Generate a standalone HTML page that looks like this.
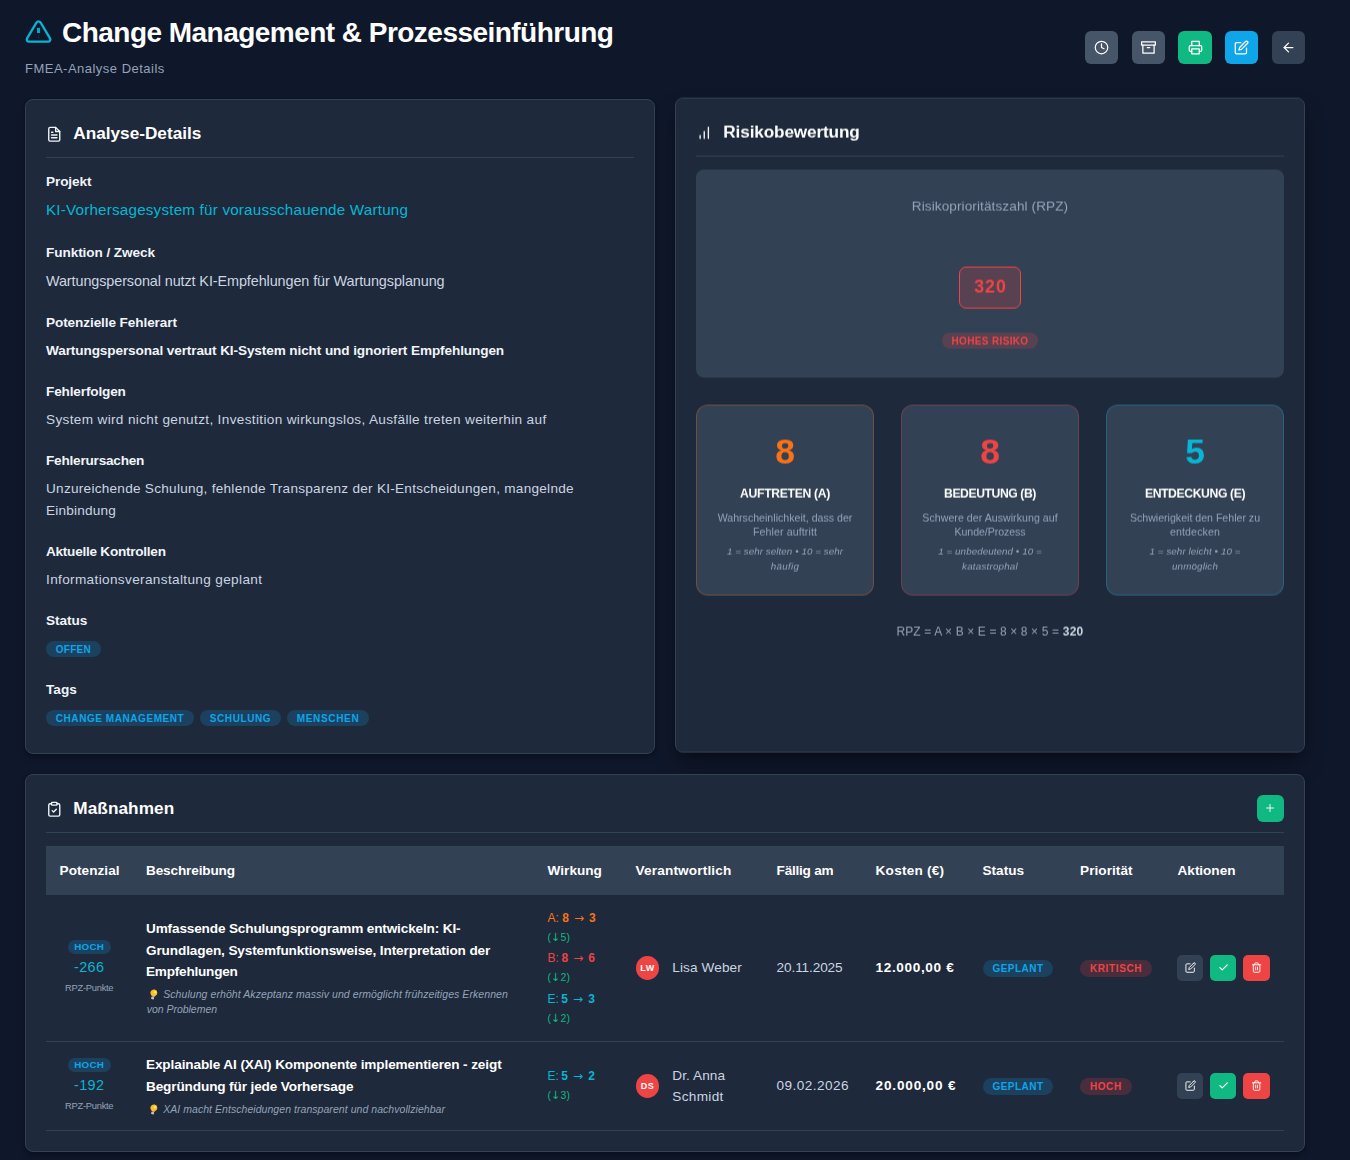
<!DOCTYPE html>
<html lang="de">
<head>
<meta charset="utf-8">
<title>FMEA-Analyse Details – Change Management &amp; Prozesseinführung</title>
<style>
*{box-sizing:border-box;margin:0;padding:0}
html,body{width:1350px;height:1160px;overflow:hidden}
body{background:#0f172a;color:#f1f5f9;font-family:"Liberation Sans","DejaVu Sans",sans-serif;font-size:14px;line-height:22px;position:relative}
svg{display:block}
.ic{fill:none;stroke:currentColor;stroke-width:2;stroke-linecap:round;stroke-linejoin:round}

/* ---------- page header ---------- */
.page-header{position:absolute;left:25px;top:0;width:1280px;height:99px}
.page-title{position:absolute;left:0;top:13px;height:40px;display:flex;align-items:center;white-space:nowrap;
  font-size:28px;line-height:40px;font-weight:700;color:#fff;letter-spacing:-.54px}
.page-title svg{position:absolute;left:-.2px;top:4.85px;width:27.1px;height:27.1px;color:#06b6d4}
.page-title span{margin-left:37px}
.page-sub{position:absolute;left:0;top:59px;font-size:13px;line-height:20px;color:#94a3b8;letter-spacing:.45px;white-space:nowrap}
.actions{position:absolute;right:0;top:31px;display:flex;gap:14px}
.btn{width:33px;height:33px;border-radius:6px;display:flex;align-items:center;justify-content:center;color:#fff;background:#475569}
.btn svg{width:15px;height:15px;margin-top:-.5px}
.btn.green{background:#10b981;width:34px;margin:0 -1px}
.btn.blue{background:#0ea5e9}
.btn.dark{background:#334155}

/* ---------- cards ---------- */
.card{position:absolute;background:#1e293b;border:1px solid #334155;border-radius:8px;padding:20px;
  box-shadow:0 4px 6px -1px rgba(0,0,0,.26),0 2px 4px -1px rgba(0,0,0,.18)}
.card-head{display:flex;align-items:flex-start;height:38px;border-bottom:1px solid #334155;margin-bottom:13px;position:relative}
.card-head svg{width:16.5px;height:16.5px;margin:6px 12px 0 0;color:#f1f5f9;flex:none}
.card-head h2{font-size:17.2px;line-height:22px;margin:2px 0 0 -1.2px;font-weight:700;color:#fff;white-space:nowrap}

#details{left:25px;top:99px;width:630px;height:655px}
#risk{left:675px;top:98px;width:630px;height:655px;filter:url(#subpx);
  box-shadow:0 12px 24px -4px rgba(0,0,0,.4),0 4px 8px -2px rgba(0,0,0,.26)}
#measures{left:25px;top:774px;width:1280px;height:378px}

/* ---------- detail fields ---------- */
.field{height:69px}
.field.f1{height:71px}
.field.f2{height:70px}
.field.f5{height:91px}
.field .lbl{font-size:13.6px;line-height:22px;font-weight:700;color:#f1f5f9;letter-spacing:-.3px;white-space:nowrap}
.field .val{font-size:13.6px;line-height:22px;color:#cbd5e1;margin-top:6px;letter-spacing:.1px;white-space:nowrap}
.field .val.link{font-size:15.2px;line-height:24px;margin-top:5px;color:#06b6d4;letter-spacing:.29px}
.field .val.mid{font-size:14.4px}
.field .val.strong{font-weight:700;color:#f1f5f9;letter-spacing:-.32px}
.badge{display:inline-block;vertical-align:top;border-radius:999px;font-weight:700;text-transform:uppercase;white-space:nowrap}
.badge.blue{background:rgba(14,165,233,.2);color:#0ea5e9}
.badge.red{background:rgba(239,68,68,.2);color:#ef4444}
.tags{display:flex;gap:6px;margin-top:9px}
.tags .badge{height:16.3px;line-height:17.2px}
.badge{font-size:10px;line-height:17.6px;height:17px;padding:0 9.8px;letter-spacing:.3px}
td>.badge{position:relative;top:3px}

/* ---------- risk card ---------- */
.rpz-panel{height:208px;background:#334155;border-radius:8px;text-align:center;position:relative}
.rpz-panel .cap{position:absolute;left:0;right:0;top:26px;font-size:13.6px;line-height:22px;color:#94a3b8;letter-spacing:.3px}
.rpz-val{position:absolute;left:263px;top:97px;width:62px;height:42px;border:1px solid #ef4444;border-radius:7px;background:rgba(239,68,68,.2);
  color:#ef4444;font-size:17.8px;font-weight:700;line-height:38.4px;letter-spacing:1px;text-indent:1px}
.rpz-panel .badge{position:absolute;left:246px;top:162.7px;width:96px;height:16.4px;line-height:17px;padding:0}
.factors{display:flex;gap:27px;margin-top:27px}
.factor{width:178px;height:191px;background:#334155;border:1px solid #334155;border-radius:12px;text-align:center;position:relative}
.factor.a{border-color:rgba(249,115,22,.3)}
.factor.b{border-color:rgba(239,68,68,.3)}
.factor.e{border-color:rgba(6,182,212,.3)}
.factor .num{position:absolute;left:0;right:0;top:24.4px;font-size:35.5px;line-height:44px;font-weight:700}
.factor.a .num{color:#f97316}
.factor.b .num{color:#ef4444}
.factor.e .num{color:#06b6d4}
.factor .name{position:absolute;left:0;right:0;top:78.2px;font-size:12.2px;line-height:20px;font-weight:700;color:#fff;letter-spacing:-.2px}
.factor .desc{position:absolute;left:0;right:0;top:105px;font-size:10.6px;line-height:14px;color:#94a3b8;letter-spacing:.3px}
.factor .scale{position:absolute;left:0;right:0;top:137.7px;font-size:9.8px;line-height:15px;color:#94a3b8;font-style:italic;letter-spacing:.3px}
.formula{margin-top:26px;text-align:center;font-size:12px;line-height:20px;color:#94a3b8;letter-spacing:.3px}
.formula b{color:#cbd5e1}

/* ---------- measures ---------- */
.add{position:absolute;right:0;top:0;width:27px;height:27px;border-radius:6px;background:#10b981;color:#fff;display:flex;align-items:center;justify-content:center}
.card-head .add svg{width:12px;height:12px;margin:-.5px 0 0 -.5px}
table{border-collapse:collapse;table-layout:fixed;width:1238px;font-size:13.6px;line-height:21.76px}
th{background:#334155;height:49px;padding:0 13.6px;text-align:left;font-weight:700;color:#fff;letter-spacing:-.3px;white-space:nowrap;vertical-align:middle}
td{padding:0 13.6px;vertical-align:middle;border-bottom:1px solid #334155;color:#cbd5e1;white-space:nowrap}
tr.r1 td{height:146px}
tr.r2 td{height:89px}
.pot{text-align:center;padding-bottom:2px}
.pot .badge{font-size:9.8px;line-height:14.4px;height:14px;padding:0;letter-spacing:.5px;display:block;width:43.4px;margin:-1px auto 0}
.pot .delta{display:block;font-size:14.4px;line-height:22px;color:#06b6d4;margin-top:5px;letter-spacing:.4px}
.pot .unit{display:block;font-size:9.4px;line-height:16px;color:#94a3b8;margin-top:2px}
.desc-main{font-weight:700;color:#fff;letter-spacing:-.3px;padding-top:.6px;line-height:21.5px}
.desc-note{font-size:10.5px;line-height:15.6px;color:#94a3b8;font-style:italic;margin-top:4.4px;letter-spacing:.2px;padding-left:.8px}
.eff{font-size:12px;line-height:19px;height:40.5px}
.eff:last-child{height:37.4px}
.arr{font-family:"DejaVu Sans",sans-serif;font-weight:400;font-size:1em;line-height:1;margin:0 1.7px}
small .arr{font-size:1.08em;margin:0 -.3px}
.eff b{font-weight:700}
.eff.e b{margin-left:-.9px}
.eff.b b{margin-left:-.7px}
.eff small{display:block;font-size:10.4px;line-height:19.8px;color:#10b981;letter-spacing:.3px}
.eff.a{color:#f97316}.eff.b{color:#ef4444}.eff.e{color:#06b6d4}
.who{display:flex;align-items:center}
.r2 .who>span:last-child{line-height:21px;padding-top:1.8px}
.r2 .avatar{margin-top:2px}
.avatar{width:23.4px;height:24px;border-radius:50%;background:#ef4444;color:#fff;font-size:9px;font-weight:700;line-height:24px;text-align:center;flex:none;margin-right:13.3px;letter-spacing:.3px;text-indent:.3px}
.cost{font-weight:700;color:#fff}
.acts{display:flex;gap:7px;margin-left:-.4px}
.abtn{width:26.7px;height:26px;border-radius:5px;display:flex;align-items:center;justify-content:center;color:#fff;background:#334155}
.abtn svg{width:11.2px;height:11.2px}
.abtn.green{background:#10b981}
.abtn.red{background:#ef4444;width:27.6px}
.abtn.green svg{stroke-width:2.5}
.bulb{display:inline-block;vertical-align:-2.2px;width:11px;height:11px;margin:0 3.8px 0 1.6px}
</style>
</head>
<body>
<svg width="0" height="0" style="position:absolute" aria-hidden="true"><filter id="subpx" x="-8%" y="-8%" width="116%" height="116%" color-interpolation-filters="sRGB"><feOffset dy="-1" result="up"/><feComposite in="up" in2="SourceGraphic" operator="arithmetic" k2=".4" k3=".6"/></filter></svg>

<header class="page-header">
  <h1 class="page-title">
    <svg viewBox="0 0 24 24" class="ic"><path d="M10.29 3.86 1.82 18a2 2 0 0 0 1.71 3h16.94a2 2 0 0 0 1.71-3L13.71 3.86a2 2 0 0 0-3.42 0z"/><path d="M12 8.7v4.6" stroke-linecap="butt" stroke-width="2.7" opacity=".9"/><path d="M12 17h.01" opacity=".12"/></svg>
    <span style="letter-spacing:-.53px">Change Management &amp; Prozesseinführung</span>
  </h1>
  <p class="page-sub" style="letter-spacing:.49px">FMEA-Analyse Details</p>
  <nav class="actions">
    <a class="btn"><svg viewBox="0 0 24 24" class="ic"><circle cx="12" cy="12" r="10"/><path d="M12 6v6l4 2"/></svg></a>
    <a class="btn"><svg viewBox="0 0 24 24" class="ic"><path d="M21 8v13H3V8"/><rect x="1" y="3" width="22" height="5"/><path d="M10 12h4"/></svg></a>
    <a class="btn green"><svg viewBox="0 0 24 24" class="ic"><path d="M6 9V2h12v7"/><path d="M6 18H4a2 2 0 0 1-2-2v-5a2 2 0 0 1 2-2h16a2 2 0 0 1 2 2v5a2 2 0 0 1-2 2h-2"/><rect x="6" y="14" width="12" height="8"/></svg></a>
    <a class="btn blue"><svg viewBox="0 0 24 24" class="ic"><path d="M11 4H4a2 2 0 0 0-2 2v14a2 2 0 0 0 2 2h14a2 2 0 0 0 2-2v-7"/><path d="M18.5 2.5a2.121 2.121 0 0 1 3 3L12 15l-4 1 1-4 9.5-9.5z"/></svg></a>
    <a class="btn dark"><svg viewBox="0 0 24 24" class="ic"><path d="m12 19-7-7 7-7"/><path d="M19 12H5"/></svg></a>
  </nav>
</header>

<section class="card" id="details">
  <div class="card-head">
    <svg viewBox="0 0 24 24" class="ic"><path d="M14 2H6a2 2 0 0 0-2 2v16a2 2 0 0 0 2 2h12a2 2 0 0 0 2-2V8z"/><path d="M14 2v6h6"/><path d="M16 13H8"/><path d="M16 17H8"/><path d="M10 9H8"/></svg>
    <h2 style="letter-spacing:0">Analyse-Details</h2>
  </div>
  <div class="field f1"><div class="lbl" style="letter-spacing:-.11px">Projekt</div><div class="val link" style="letter-spacing:.21px">KI-Vorhersagesystem für vorausschauende Wartung</div></div>
  <div class="field f2"><div class="lbl" style="letter-spacing:-.08px">Funktion / Zweck</div><div class="val mid" style="letter-spacing:-.09px">Wartungspersonal nutzt KI-Empfehlungen für Wartungsplanung</div></div>
  <div class="field"><div class="lbl" style="letter-spacing:-.1px">Potenzielle Fehlerart</div><div class="val strong" style="letter-spacing:-.11px">Wartungspersonal vertraut KI-System nicht und ignoriert Empfehlungen</div></div>
  <div class="field"><div class="lbl" style="letter-spacing:-.15px">Fehlerfolgen</div><div class="val" style="letter-spacing:.34px">System wird nicht genutzt, Investition wirkungslos, Ausfälle treten weiterhin auf</div></div>
  <div class="field f5"><div class="lbl" style="letter-spacing:-.22px">Fehlerursachen</div><div class="val"><span style="letter-spacing:.26px">Unzureichende Schulung, fehlende Transparenz der KI-Entscheidungen, mangelnde</span><br><span style="letter-spacing:.21px">Einbindung</span></div></div>
  <div class="field"><div class="lbl" style="letter-spacing:-.26px">Aktuelle Kontrollen</div><div class="val" style="letter-spacing:.35px">Informationsveranstaltung geplant</div></div>
  <div class="field"><div class="lbl" style="letter-spacing:-.03px">Status</div><div class="tags"><span class="badge blue" style="letter-spacing:.25px">OFFEN</span></div></div>
  <div class="field"><div class="lbl" style="letter-spacing:.06px">Tags</div><div class="tags"><span class="badge blue" style="letter-spacing:.56px">CHANGE MANAGEMENT</span><span class="badge blue" style="letter-spacing:.58px">SCHULUNG</span><span class="badge blue" style="letter-spacing:.67px">MENSCHEN</span></div></div>
</section>

<section class="card" id="risk">
  <div class="card-head">
    <svg viewBox="0 0 24 24" class="ic"><path d="M12 20V10"/><path d="M18 20V4"/><path d="M6 20v-4"/></svg>
    <h2 style="letter-spacing:-.14px">Risikobewertung</h2>
  </div>
  <div class="rpz-panel">
    <div class="cap" style="letter-spacing:.09px">Risikoprioritätszahl (RPZ)</div>
    <div class="rpz-val">320</div>
    <span class="badge red" style="letter-spacing:.35px">HOHES RISIKO</span>
  </div>
  <div class="factors">
    <div class="factor a">
      <div class="num">8</div>
      <div class="name" style="letter-spacing:-.33px">AUFTRETEN (A)</div>
      <div class="desc"><span style="letter-spacing:.01px">Wahrscheinlichkeit, dass der</span><br><span style="letter-spacing:.11px">Fehler auftritt</span></div>
      <div class="scale"><span style="letter-spacing:.06px">1 = sehr selten • 10 = sehr</span><br><span style="letter-spacing:.26px">häufig</span></div>
    </div>
    <div class="factor b">
      <div class="num">8</div>
      <div class="name" style="letter-spacing:-.43px">BEDEUTUNG (B)</div>
      <div class="desc"><span style="letter-spacing:.04px">Schwere der Auswirkung auf</span><br><span style="letter-spacing:-.07px">Kunde/Prozess</span></div>
      <div class="scale"><span style="letter-spacing:.07px">1 = unbedeutend • 10 =</span><br><span style="letter-spacing:.2px">katastrophal</span></div>
    </div>
    <div class="factor e">
      <div class="num">5</div>
      <div class="name" style="letter-spacing:-.39px">ENTDECKUNG (E)</div>
      <div class="desc"><span style="letter-spacing:0">Schwierigkeit den Fehler zu</span><br><span style="letter-spacing:.15px">entdecken</span></div>
      <div class="scale"><span style="letter-spacing:.07px">1 = sehr leicht • 10 =</span><br><span style="letter-spacing:.15px">unmöglich</span></div>
    </div>
  </div>
  <p class="formula"><span style="letter-spacing:.12px">RPZ = A × B × E = 8 × 8 × 5 =</span> <b>320</b></p>
</section>

<section class="card" id="measures">
  <div class="card-head">
    <svg viewBox="0 0 24 24" class="ic"><rect width="8" height="4" x="8" y="2" rx="1"/><path d="M16 4h2a2 2 0 0 1 2 2v14a2 2 0 0 1-2 2H6a2 2 0 0 1-2-2V6a2 2 0 0 1 2-2h2"/><path d="m9 14 2 2 4-4"/></svg>
    <h2 style="letter-spacing:.07px">Maßnahmen</h2>
    <a class="add"><svg viewBox="0 0 24 24" class="ic"><path d="M12 5v14"/><path d="M5 12h14"/></svg></a>
  </div>
  <table>
    <colgroup><col style="width:86.4px"><col style="width:401.6px"><col style="width:88px"><col style="width:141px"><col style="width:99px"><col style="width:107px"><col style="width:97.5px"><col style="width:97.5px"><col style="width:120px"></colgroup>
    <thead>
      <tr><th><span style="letter-spacing:.03px">Potenzial</span></th><th><span style="letter-spacing:-.14px">Beschreibung</span></th><th><span style="letter-spacing:.01px">Wirkung</span></th><th><span style="letter-spacing:.16px">Verantwortlich</span></th><th><span style="letter-spacing:-.24px">Fällig am</span></th><th><span style="letter-spacing:.22px">Kosten (€)</span></th><th><span style="letter-spacing:-.03px">Status</span></th><th><span style="letter-spacing:.04px">Priorität</span></th><th><span style="letter-spacing:-.04px">Aktionen</span></th></tr>
    </thead>
    <tbody>
      <tr class="r1">
        <td class="pot"><span class="badge blue" style="letter-spacing:.24px">HOCH</span><span class="delta" style="letter-spacing:.41px">-266</span><span class="unit" style="letter-spacing:-.29px">RPZ-Punkte</span></td>
        <td><div class="desc-main"><span style="letter-spacing:-.15px">Umfassende Schulungsprogramm entwickeln: KI-</span><br><span style="letter-spacing:-.12px">Grundlagen, Systemfunktionsweise, Interpretation der</span><br><span style="letter-spacing:-.23px">Empfehlungen</span></div>
            <div class="desc-note"><svg class="bulb" viewBox="0 0 16 16"><g transform="rotate(14 8 8)"><path d="M8 .6a5 5 0 0 0-3 9c.6.5.9 1 .9 1.7h4.2c0-.7.3-1.2.9-1.7A5 5 0 0 0 8 .6z" fill="#fbbf24"/><circle cx="9.6" cy="4.2" r="1.8" fill="#fde68a"/><rect x="5.9" y="11.6" width="4.2" height="3.6" rx="1" fill="#d8b4c8"/></g></svg><span style="letter-spacing:.07px">Schulung erhöht Akzeptanz massiv und ermöglicht frühzeitiges Erkennen</span><br><span style="letter-spacing:-.03px">von Problemen</span></div></td>
        <td><div class="eff a">A: <b>8 <span class="arr">→</span> 3</b><small>(<span class="arr">↓</span>5)</small></div><div class="eff b">B: <b>8 <span class="arr">→</span> 6</b><small>(<span class="arr">↓</span>2)</small></div><div class="eff e">E: <b>5 <span class="arr">→</span> 3</b><small>(<span class="arr">↓</span>2)</small></div></td>
        <td><div class="who"><span class="avatar">LW</span><span style="letter-spacing:.11px">Lisa Weber</span></div></td>
        <td><span style="letter-spacing:-.11px">20.11.2025</span></td>
        <td class="cost"><span style="letter-spacing:.63px">12.000,00 €</span></td>
        <td><span class="badge blue" style="letter-spacing:.49px">GEPLANT</span></td>
        <td><span class="badge red" style="letter-spacing:.64px">KRITISCH</span></td>
        <td><div class="acts"><a class="abtn"><svg viewBox="0 0 24 24" class="ic"><path d="M11 4H4a2 2 0 0 0-2 2v14a2 2 0 0 0 2 2h14a2 2 0 0 0 2-2v-7"/><path d="M18.5 2.5a2.121 2.121 0 0 1 3 3L12 15l-4 1 1-4 9.5-9.5z"/></svg></a><a class="abtn green"><svg viewBox="0 0 24 24" class="ic"><path d="M20 6 9 17l-5-5"/></svg></a><a class="abtn red"><svg viewBox="0 0 24 24" class="ic"><path d="M3 6h18"/><path d="M19 6v14a2 2 0 0 1-2 2H7a2 2 0 0 1-2-2V6m3 0V4a2 2 0 0 1 2-2h4a2 2 0 0 1 2 2v2"/><path d="M10 11v6"/><path d="M14 11v6"/></svg></a></div></td>
      </tr>
      <tr class="r2">
        <td class="pot"><span class="badge blue" style="letter-spacing:.24px">HOCH</span><span class="delta" style="letter-spacing:.41px">-192</span><span class="unit" style="letter-spacing:-.29px">RPZ-Punkte</span></td>
        <td><div class="desc-main"><span style="letter-spacing:-.12px">Explainable AI (XAI) Komponente implementieren - zeigt</span><br><span style="letter-spacing:-.13px">Begründung für jede Vorhersage</span></div>
            <div class="desc-note"><svg class="bulb" viewBox="0 0 16 16"><g transform="rotate(14 8 8)"><path d="M8 .6a5 5 0 0 0-3 9c.6.5.9 1 .9 1.7h4.2c0-.7.3-1.2.9-1.7A5 5 0 0 0 8 .6z" fill="#fbbf24"/><circle cx="9.6" cy="4.2" r="1.8" fill="#fde68a"/><rect x="5.9" y="11.6" width="4.2" height="3.6" rx="1" fill="#d8b4c8"/></g></svg><span style="letter-spacing:.05px">XAI macht Entscheidungen transparent und nachvollziehbar</span></div></td>
        <td><div class="eff e">E: <b>5 <span class="arr">→</span> 2</b><small>(<span class="arr">↓</span>3)</small></div></td>
        <td><div class="who"><span class="avatar">DS</span><span><span style="letter-spacing:.09px">Dr. Anna</span><br><span style="letter-spacing:.32px">Schmidt</span></span></div></td>
        <td><span style="letter-spacing:.43px">09.02.2026</span></td>
        <td class="cost"><span style="letter-spacing:.81px">20.000,00 €</span></td>
        <td><span class="badge blue" style="letter-spacing:.49px">GEPLANT</span></td>
        <td><span class="badge red" style="letter-spacing:.62px">HOCH</span></td>
        <td><div class="acts"><a class="abtn"><svg viewBox="0 0 24 24" class="ic"><path d="M11 4H4a2 2 0 0 0-2 2v14a2 2 0 0 0 2 2h14a2 2 0 0 0 2-2v-7"/><path d="M18.5 2.5a2.121 2.121 0 0 1 3 3L12 15l-4 1 1-4 9.5-9.5z"/></svg></a><a class="abtn green"><svg viewBox="0 0 24 24" class="ic"><path d="M20 6 9 17l-5-5"/></svg></a><a class="abtn red"><svg viewBox="0 0 24 24" class="ic"><path d="M3 6h18"/><path d="M19 6v14a2 2 0 0 1-2 2H7a2 2 0 0 1-2-2V6m3 0V4a2 2 0 0 1 2-2h4a2 2 0 0 1 2 2v2"/><path d="M10 11v6"/><path d="M14 11v6"/></svg></a></div></td>
      </tr>
    </tbody>
  </table>
</section>

</body>
</html>
